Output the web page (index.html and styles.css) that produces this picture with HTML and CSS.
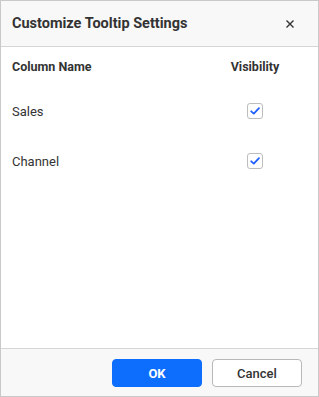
FILE: index.html
```html
<!DOCTYPE html>
<html lang="en">
<head>
<meta charset="UTF-8">
<meta name="viewport" content="width=device-width, initial-scale=1.0">
<link rel="stylesheet" href="styles.css">
<title>Customize Tooltip Settings</title>
</head>
<body>
<div class="dialog">
    <div class="dialog-header">
        <span class="dialog-title">Customize Tooltip Settings</span>
        <button class="close-btn" aria-label="Close">
            <svg width="10" height="10" viewBox="0 0 10 10">
                <path d="M1.5 1.5 L8.5 8.5 M8.5 1.5 L1.5 8.5" stroke="#333" stroke-width="1.4" fill="none"/>
            </svg>
        </button>
    </div>
    <div class="dialog-content">
        <div class="settings-grid">
            <div class="grid-head">Column Name</div>
            <div class="grid-head center">Visibility</div>

            <div class="cell">Sales</div>
            <div class="cell center">
                <span class="checkbox">
                    <svg width="12" height="12" viewBox="0 0 12 12">
                        <path d="M2.2 6.3 L4.8 8.6 L10 3.2" stroke="#1f5eff" stroke-width="1.8" fill="none" stroke-linecap="round" stroke-linejoin="round"/>
                    </svg>
                </span>
            </div>

            <div class="cell">Channel</div>
            <div class="cell center">
                <span class="checkbox">
                    <svg width="12" height="12" viewBox="0 0 12 12">
                        <path d="M2.2 6.3 L4.8 8.6 L10 3.2" stroke="#1f5eff" stroke-width="1.8" fill="none" stroke-linecap="round" stroke-linejoin="round"/>
                    </svg>
                </span>
            </div>
        </div>
    </div>
    <div class="dialog-footer">
        <button class="btn btn-primary">OK</button>
        <button class="btn btn-default">Cancel</button>
    </div>
</div>
</body>
</html>
```

FILE: styles.css
```css
body {
    margin: 0;
    padding: 0;
    font-family: Roboto, "Liberation Sans", Arial, sans-serif;
    color: #333;
    background-color: #ffffff;
}

.dialog {
    width: 319px;
    height: 397px;
    box-sizing: border-box;
    border: 1px solid #c9c9c9;
    display: flex;
    flex-direction: column;
    background-color: #ffffff;
}

.dialog-header {
    height: 45px;
    flex-shrink: 0;
    display: flex;
    align-items: center;
    justify-content: space-between;
    padding: 0 20px 0 11px;
    background-color: #f8f8f8;
    border-bottom: 1px solid #d6d6d6;
}

.dialog-title {
    font-size: 14.5px;
    font-weight: bold;
    color: #333;
}

.close-btn {
    border: none;
    background: none;
    padding: 0;
    width: 16px;
    height: 16px;
    display: flex;
    align-items: center;
    justify-content: center;
    cursor: pointer;
}

.dialog-content {
    flex: 1;
    padding: 0 23px 0 11px;
}

.settings-grid {
    display: grid;
    grid-template-columns: 1fr 80px;
    grid-template-rows: 39px 50px 50px;
    align-items: center;
}

.grid-head {
    font-size: 12.5px;
    font-weight: bold;
}

.cell {
    font-size: 13px;
}

.center {
    text-align: center;
}

.checkbox {
    display: inline-flex;
    align-items: center;
    justify-content: center;
    width: 16px;
    height: 16px;
    box-sizing: border-box;
    border: 1px solid #bdbdbd;
    border-radius: 3px;
    background-color: #ffffff;
    vertical-align: middle;
}

.dialog-footer {
    height: 48px;
    flex-shrink: 0;
    display: flex;
    justify-content: flex-end;
    align-items: flex-start;
    gap: 10px;
    padding: 10px 16px 0 0;
    box-sizing: border-box;
    background-color: #f8f8f8;
    border-top: 1px solid #d6d6d6;
}

.btn {
    width: 90px;
    height: 28px;
    border-radius: 4px;
    font-family: Roboto, "Liberation Sans", Arial, sans-serif;
    font-size: 13px;
    cursor: pointer;
}

.btn-primary {
    background-color: #0d6efd;
    border: 1px solid #0d6efd;
    color: #ffffff;
    font-weight: bold;
}

.btn-default {
    background-color: #ffffff;
    border: 1px solid #b8b8b8;
    color: #333;
    font-weight: 500;
}
```
